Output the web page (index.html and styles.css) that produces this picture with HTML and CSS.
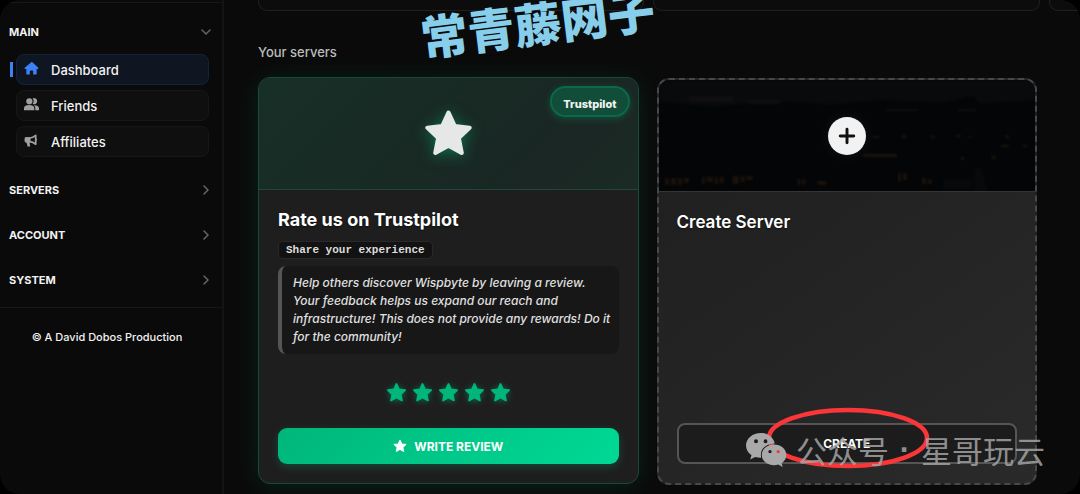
FILE: index.html
```html
<!DOCTYPE html>
<html lang="en">
<head>
<meta charset="utf-8">
<title>Dashboard</title>
<link rel="stylesheet" href="styles.css">
</head>
<body>
<svg class="defs" aria-hidden="true">
  <symbol id="star" viewBox="0 0 24 24"><path d="M12 2.200l2.900 6.300 7 .8-5.100 4.800 1.400 7L12 17.700l-6.200 3.400 1.400-7L2.100 9.300l7-.8z" fill="currentColor" stroke="currentColor" stroke-width="2" stroke-linejoin="round"/></symbol>
  <symbol id="chevron" viewBox="0 0 10 10"><path d="M3 1l4 4-4 4" fill="none" stroke="currentColor" stroke-width="1.500" stroke-linecap="round" stroke-linejoin="round"/></symbol>
</svg>
<div class="shell">
  <aside class="sidebar">
    <nav class="nav">
      <button class="group open" type="button">MAIN<svg class="chev"><use href="#chevron"/></svg></button>
      <div class="links">
        <a class="link active" href="#"><svg class="ico" viewBox="0 0 16 16"><path d="M8 1L.8 7.300c-.5.500-.2 1.200.4 1.200h1.300v5c0 .6.400 1 1 1h2.700v-3.600c0-.5.300-.8.800-.8h2c.5 0 .8.300.8.800v3.600h2.700c.6 0 1-.4 1-1v-5h1.300c.6 0 .9-.7.400-1.200L9 1.400a1.500 1.500 0 0 0-2 0z" fill="currentColor"/></svg>Dashboard</a>
        <a class="link" href="#"><svg class="ico" viewBox="0 0 16 16"><g fill="currentColor"><circle cx="5.700" cy="4.500" r="3.300"/><path d="M9.200 1.600a3.300 3.300 0 1 1 0 5.800 4.800 4.800 0 0 0 0-5.800zM0 14v-2.200C0 9.700 2.500 8.500 5.500 8.500S11 9.700 11 11.800V14zM12 14v-2.200c0-1.300-.6-2.300-1.600-3.100C13.500 8.500 16 9.700 16 11.800V14z"/></g></svg>Friends</a>
        <a class="link" href="#"><svg class="ico" viewBox="0 0 16 16"><path d="M12.500 2.500v9.500c-2-1.800-4-2.600-6.500-2.800H2.500c-.7 0-1-.3-1-1V6.300c0-.7.300-1 1-1H6c2.500-.2 4.500-1 6.500-2.800z" fill="none" stroke="currentColor" stroke-width="1.800" stroke-linejoin="round"/><path d="M1 4.600h6v5.200H1zM2.600 9.500h3.200l.8 5H3.800zM13.200 5.700a1.800 1.800 0 0 1 0 3z" fill="currentColor"/></svg>Affiliates</a>
      </div>
      <button class="group" type="button">SERVERS<svg class="chev"><use href="#chevron"/></svg></button>
      <button class="group" type="button">ACCOUNT<svg class="chev"><use href="#chevron"/></svg></button>
      <button class="group" type="button">SYSTEM<svg class="chev"><use href="#chevron"/></svg></button>
    </nav>
    <footer class="credit">© A David Dobos Production</footer>
  </aside>
  <main class="main">
    <div class="strip"><div class="tile"></div><div class="tile"></div><div class="tile"></div></div>
    <h2 class="heading">Your servers</h2>
    <div class="cards">
      <article class="card review">
        <header class="cover"><svg class="bigstar"><use href="#star"/></svg><span class="badge">Trustpilot</span></header>
        <div class="body">
          <h3 class="title bold">Rate us on Trustpilot</h3>
          <span class="chip">Share your experience</span>
          <p class="quote">Help others discover Wispbyte by leaving a review. Your feedback helps us expand our reach and infrastructure! This does not provide any rewards! Do it for the community!</p>
          <div class="stars"><svg><use href="#star"/></svg><svg><use href="#star"/></svg><svg><use href="#star"/></svg><svg><use href="#star"/></svg><svg><use href="#star"/></svg></div>
          <button class="write" type="button"><svg><use href="#star"/></svg>WRITE REVIEW</button>
        </div>
      </article>
      <article class="card create">
        <header class="cover night">
          <svg class="city" viewBox="0 0 378 111" preserveAspectRatio="none" aria-hidden="true">
            <path d="M0 0h378v20l-55 4-8-8-30 7-60-3-50 5-60-4-60 6L0 22z" fill="#080a0c"/>
            <g fill="#100e0e"><path d="M30 16h45v6H30zM90 20h32v4H90zM228 29h32v2h-32zM300 29h18v2h-18z"/></g>
            <g fill="#1b120b"><path d="M6 98h4v7H6zM12 98h5v7h-5zM19 98h4v7h-4zM25 98h5v5h-5zM43 97h3v7h-3zM48 97h6v5h-6zM56 97h3v7h-3zM61 97h4v6h-4zM74 96h6v8h-6zM82 96h4v6h-4zM88 96h6v4h-6zM139 99h3v6h-3zM144 99h3v6h-3zM159 101h9v4h-9zM240 93h3v9h-3zM245 93h4v7h-4zM264 98h4v6h-4zM270 99h4v5h-4zM318 96h6v5h-6z"/></g>
            <g fill="#19150e"><path d="M215 56h6v2h-6zM244 55h4v3h-4zM272 56h5v2h-5zM298 55h5v2h-5zM311 56h3v2h-3zM348 55h3v3h-3zM343 65h8v2h-8zM365 65h5v2h-5zM303 77h3v3h-3zM334 76h4v3h-4zM205 74h34v3h-34z"/></g>
            <path d="M316 88h8l6 23h-14zM285 99h30v10h-30z" fill="#07090b"/>
          </svg>
          <span class="plus"><svg viewBox="0 0 16 16"><path d="M8 2v12M2 8h12" stroke="#111" stroke-width="2.600" stroke-linecap="round"/></svg></span>
        </header>
        <div class="body">
          <h3 class="title">Create Server</h3>
          <button class="make" type="button">CREATE</button>
        </div>
      </article>
    </div>
  </main>
  <div class="stamp" lang="zh">常青藤网子</div>
  <svg class="ring" viewBox="0 0 164 62" aria-hidden="true"><ellipse cx="82" cy="31" rx="79" ry="28" fill="none" stroke="#fa3638" stroke-width="4.500"/></svg>
  <div class="mark" lang="zh">
    <svg viewBox="0 0 42 34" aria-hidden="true"><path fill="#a9a9a9" fill-rule="evenodd" d="M15 0C6.500 0 0 5.500 0 12.600c0 4 2.100 7.300 5.500 9.700L4.200 26.500l5-2.600c2 .6 4 .9 6 .8C13.500 17 19 10.500 28.800 10.400 27.500 4.500 22 0 15 0zM10 6.200a2 2 0 1 1 0 4 2 2 0 0 1 0-4zm9.600 0a2 2 0 1 1 0 4 2 2 0 0 1 0-4z"/><path fill="#a9a9a9" fill-rule="evenodd" d="M28 11.600c-7 0-12.200 4.600-12.200 10.300C15.800 27.800 21 32.300 28 32.300c1.500 0 3-.2 4.300-.7l4.500 2.400-1.200-3.800c2.900-2 4.700-5 4.700-8.300 0-5.700-5.300-10.300-12.300-10.300zm-4 5.300a1.700 1.700 0 1 1 0 3.400 1.700 1.700 0 0 1 0-3.400zm8.200 0a1.700 1.700 0 1 1 0 3.400 1.700 1.700 0 0 1 0-3.400z"/></svg>
    <span>公众号</span><span class="dot">·</span><span>星哥玩云</span>
  </div>
</div>
</body>
</html>
```

FILE: styles.css
```css
* { box-sizing: border-box; }
body { margin: 0; background: #000; color: #f2f2f2; font-family: Inter, "Liberation Sans", sans-serif; }
button { font-family: inherit; color: inherit; cursor: pointer; }
h2, h3, p { margin: 0; }
.defs { position: absolute; width: 0; height: 0; }
.shell { position: relative; display: flex; min-height: 100vh; background: #0a0a0a; border-radius: 20px; overflow: hidden; }

.sidebar { flex: 0 0 224px; border-right: 2px solid #141414; }
.nav { margin-top: 2px; padding: 6px 0 5px; border-top: 1px solid #171717; border-bottom: 1px solid #171717; }
.group { display: flex; align-items: center; justify-content: space-between; width: 100%; height: 45px; padding: 0 11px 0 9px; border: 0; background: none; font-size: 11px; font-weight: 700; }
.chev { width: 10px; height: 10px; color: #666; }
.group.open .chev { transform: rotate(90deg); }
.links { display: flex; flex-direction: column; gap: 5px; padding: 0 13px 10px 16px; }
.link { position: relative; display: flex; align-items: center; gap: 12px; height: 31px; padding: 0 7px; border: 1px solid #171717; border-radius: 8px; background: #0f0f0f; color: #f2f2f2; font-size: 13px; font-weight: 500; text-decoration: none; }
.ico { width: 15px; height: 15px; margin-bottom: 3px; color: #a0a0a0; }
.link.active { background: #0f1521; border-color: #13233f; }
.link.active .ico { color: #3b82f6; }
.link.active::before { content: ""; position: absolute; left: -7px; top: 7px; width: 3px; height: 15px; background: #3b82f6; }
.credit { padding: 21px 8px 21px 0; text-align: center; font-size: 11px; font-weight: 500; line-height: 16px; }

.main { flex: 1; min-width: 0; padding: 0 0 9px 34px; }
.strip { display: flex; gap: 9px; overflow: hidden; }
.tile { flex: 0 0 47%; height: 11px; border: 1px solid #202020; border-top: 0; border-radius: 0 0 9px 9px; background: #0c0c0c; }
.heading { margin: 32px 0 16px; font-size: 13px; line-height: 18px; font-weight: 500; color: #bdbdbd; }
.cards { display: grid; grid-template-columns: 1fr 1fr; gap: 18px; padding-right: 43px; }
.card { display: flex; flex-direction: column; height: 407px; border-radius: 12px; }
.cover { position: relative; display: flex; align-items: center; justify-content: center; flex: none; height: 112px; border-radius: 11px 11px 0 0; }
.body { display: flex; flex-direction: column; align-items: flex-start; flex: 1; padding: 19px 18px; }
.title { font-size: 17px; line-height: 22px; font-weight: 600; color: #fff; text-shadow: 0 1px 2px #0008; }

.review { border: 1px solid #174a38; background: #1e1e1e; box-shadow: 0 3px 28px #00b67a24; }
.review .cover { background: linear-gradient(135deg, #172f26, #1a2724 75%, #1c2a25); border-bottom: 1px solid #1b4838; }
.review .body { padding: 19px; }
.bigstar { width: 51px; height: 51px; color: #e6e8e7; filter: drop-shadow(0 2px 7px #00b67a80); }
.badge { position: absolute; top: 8px; right: 8px; padding: 8px 11px 3px; border: 2px solid #0a6949; border-radius: 16px; background: #124d3a; font-size: 11px; line-height: 16px; font-weight: 800; box-shadow: 0 2px 7px #00b67a44; }
.title.bold { font-size: 18px; font-weight: 700; }
.chip { margin-top: 10px; padding: 0 7px; border: 1px solid #292929; border-radius: 5px; background: #121212; color: #ddd; font: 700 11px/16px "Liberation Mono", monospace; }
.quote { align-self: stretch; margin-top: 7px; padding: 8px 7px 8px 11px; border-left: 4px solid #555; border-radius: 8px; background: #171717; font-size: 12px; line-height: 18px; font-style: italic; font-weight: 500; color: #e0e0e0; }
.stars { display: flex; align-self: stretch; justify-content: center; gap: 5px; margin-top: 28px; color: #00b67a; }
.stars svg { width: 21px; height: 21px; filter: drop-shadow(0 1px 3px #00b67a77); }
.write { display: flex; align-items: center; justify-content: center; gap: 7px; align-self: stretch; height: 36px; margin-top: auto; border: 0; border-radius: 9px; background: linear-gradient(135deg, #00b67a, #00d995); color: #fff; font-size: 12px; font-weight: 700; box-shadow: 0 3px 9px #00b67a44; }
.write svg { width: 14px; height: 14px; }

.create { margin-top: 1px; border: 2px dashed #484848; background: linear-gradient(145deg, #1e1e1e, #2a2a2a); }
.night { background: #040507; border-bottom: 1px solid #353535; overflow: hidden; }
.city { position: absolute; inset: 0; width: 100%; height: 100%; filter: blur(1px); }
.plus { position: relative; display: flex; align-items: center; justify-content: center; width: 38px; height: 38px; border-radius: 50%; background: #f2f2f2; box-shadow: 0 0 16px #fff1; }
.plus svg { width: 18px; height: 18px; }
.make { align-self: stretch; height: 41px; margin-top: auto; border: 2px solid #555; border-radius: 8px; background: #1c1c1c; color: #fff; font-size: 12px; font-weight: 700; }

.stamp { position: absolute; left: 420px; top: -12px; color: #87ceeb; font: 900 47px/68px "Noto Sans CJK SC", sans-serif; white-space: nowrap; transform: rotate(-7deg); }
.ring { position: absolute; left: 766px; top: 407px; width: 164px; height: 62px; }
.mark { position: absolute; left: 746px; top: 430px; display: flex; align-items: center; color: #a4a4a4dd; font: 400 31px/40px "Noto Sans CJK SC", sans-serif; white-space: nowrap; }
.mark svg { width: 42px; height: 34px; margin-right: 8px; }
.dot { width: 32px; text-align: center; font-family: "Liberation Sans", sans-serif; font-weight: 700; }
```
